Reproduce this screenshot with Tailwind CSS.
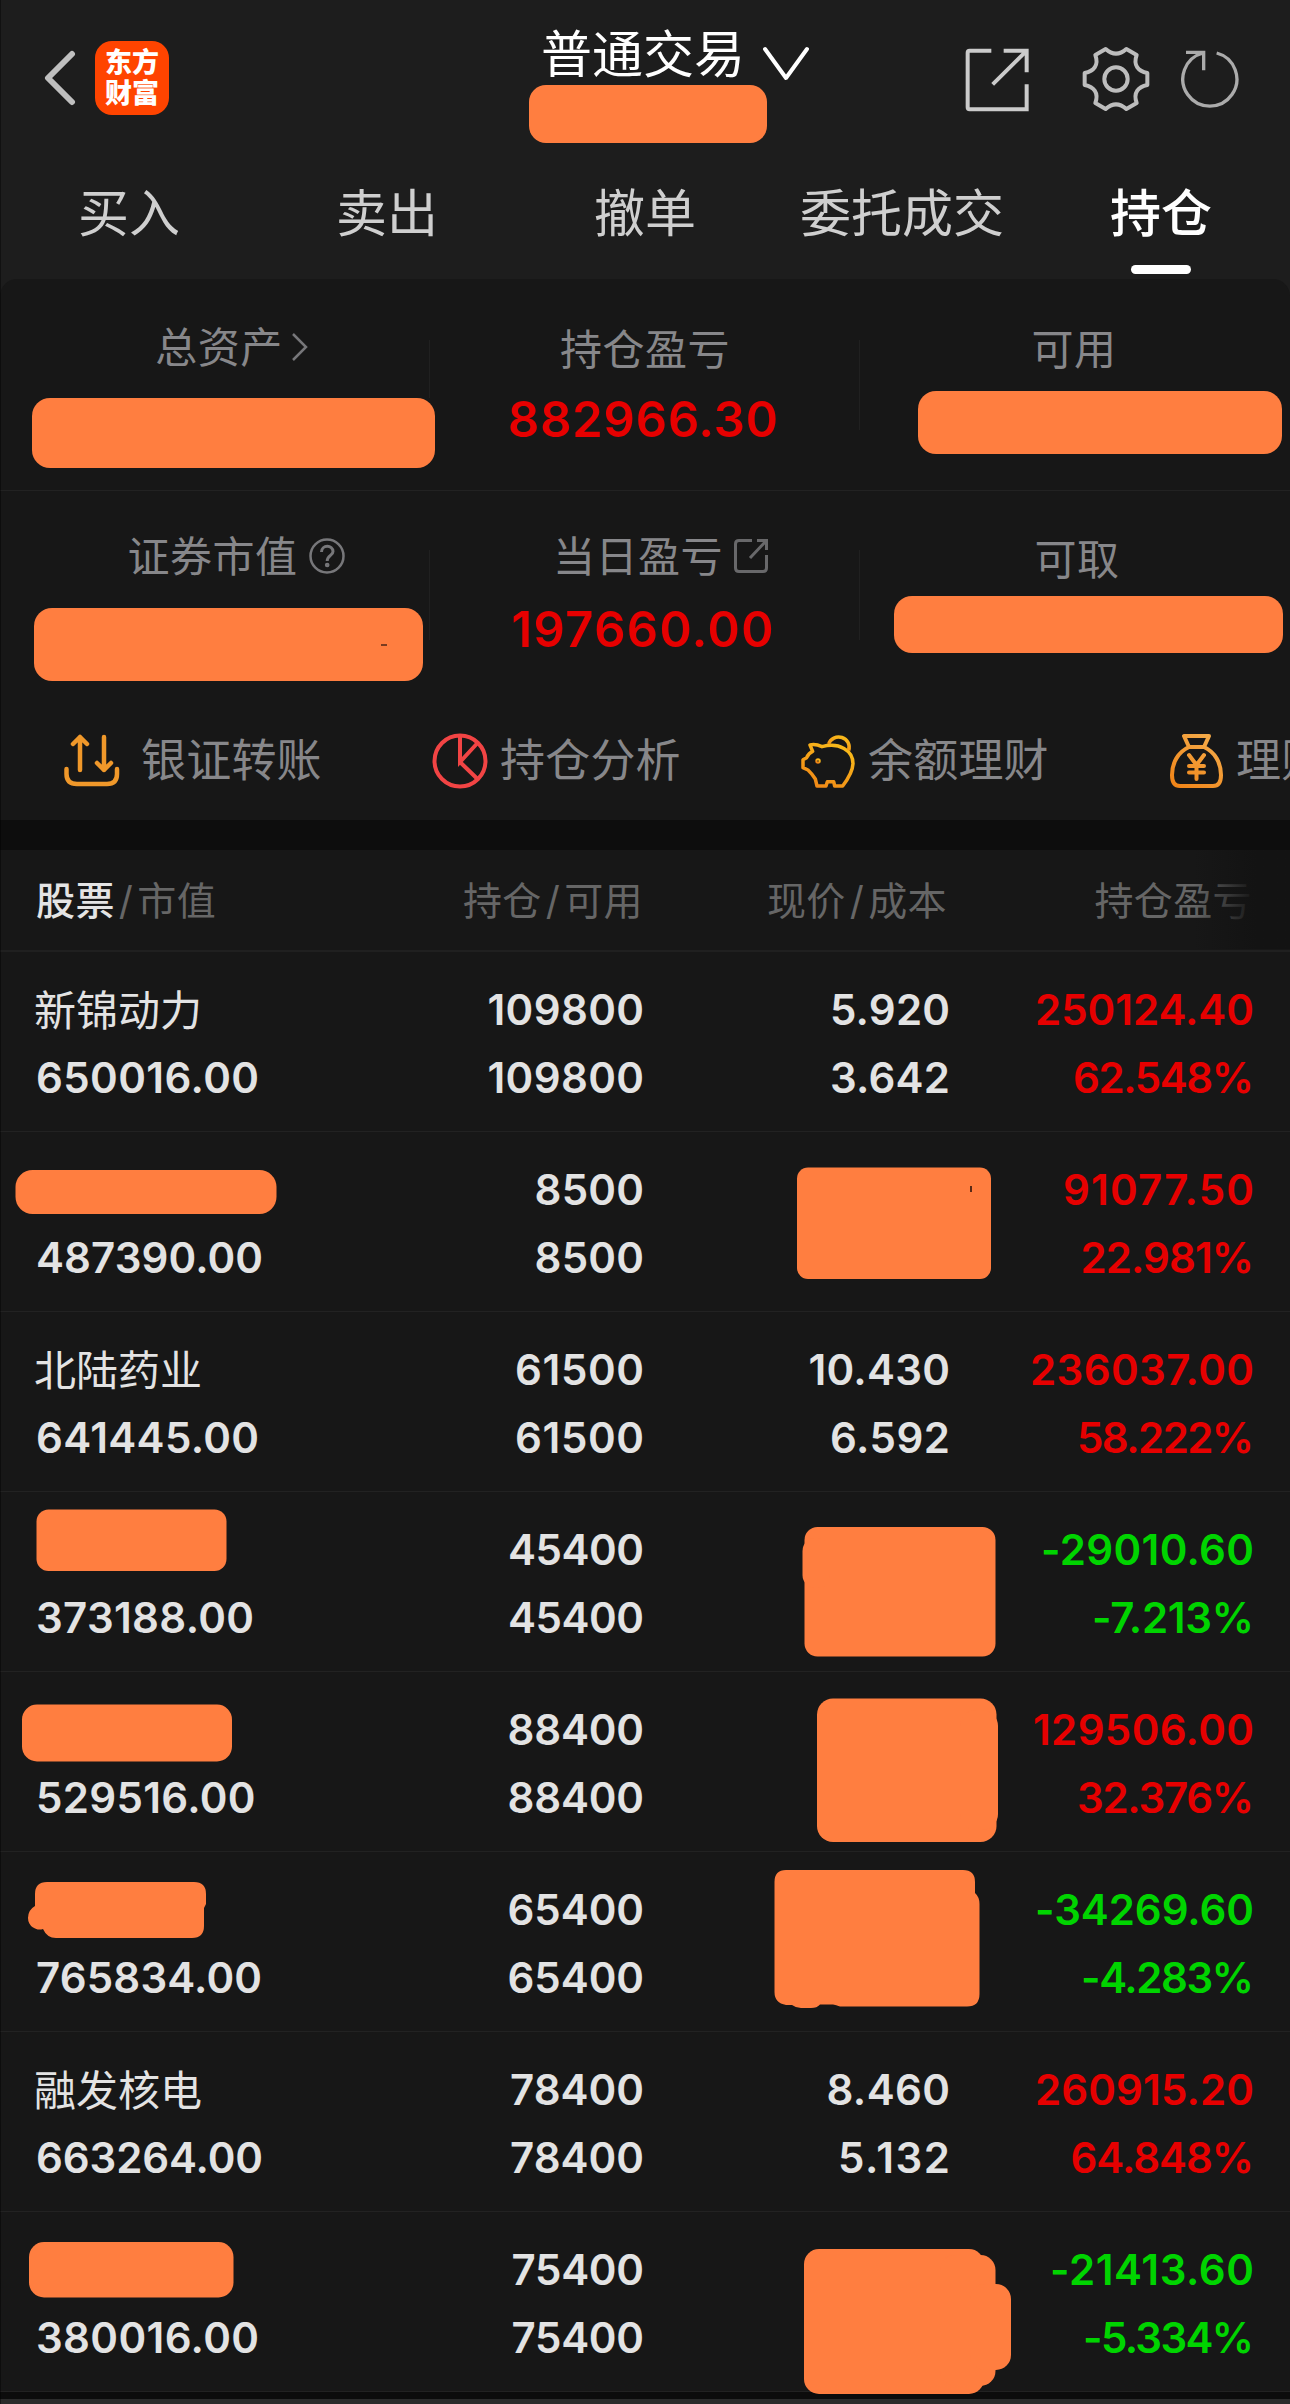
<!DOCTYPE html>
<html lang="zh-CN">
<head>
<meta charset="utf-8">
<title>持仓</title>
<script src="https://cdn.jsdelivr.net/npm/@tailwindcss/browser@4"></script>
</head>
<body class="relative w-[1290px] h-[2404px] overflow-hidden bg-[#1d1d1d] font-['Inter','Noto_Sans_CJK_SC',sans-serif]">
<header class="relative h-[168px] flex justify-between pl-[43px] pr-[49px]">
  <div class="flex items-center gap-[19px] h-[156px]">
    <svg class="w-[33px] h-[56px]" viewBox="0 0 33 56" fill="none" stroke="#bfbfbf" stroke-width="6" stroke-linecap="round" stroke-linejoin="round"><path d="M29 4L5 28L29 52"/></svg>
    <div class="w-[74px] h-[74px] rounded-[17px] bg-[#ff4400] text-white font-black text-[27px] leading-[31px] text-center pt-[6px]">东方<br>财富</div>
  </div>
  <div class="absolute left-[528px] top-[22px] flex items-center">
    <span class="ml-[13px] text-[51px] leading-[66px] text-white whitespace-nowrap">普通交易</span>
    <svg class="mt-[17px] ml-[17px] w-[47px] h-[38px]" viewBox="0 0 47 38" fill="none" stroke="#fff" stroke-width="4" stroke-linecap="round" stroke-linejoin="round"><path d="M3 4L24 33L45 4"/></svg>
  </div>
  <div class="absolute left-[529px] top-[85px] w-[238px] h-[58px] rounded-[17px] bg-[#ff7e40]"></div>
  <div class="flex items-center h-[157px] fill-none">
    <svg class="mt-[3px] w-[64px] h-[64px]" viewBox="18 85 192 192" fill="none" stroke="#cbcbcb" stroke-width="12"><path d="M97 93H32Q26 93 26 99V263Q26 269 32 269H203V194M134 93H203V158M203 93L101 194"/></svg>
    <svg class="ml-[53px] w-[68px] h-[66px]" viewBox="372 77 204 198" fill="none" stroke="#bdbdbd" stroke-width="12" stroke-linejoin="round"><path d="M443 86Q474 114 505 86L536 104C525 135 540 152 568 158V194C540 200 525 217 536 248L505 266Q474 238 443 266L412 248C423 217 408 200 380 194V158C408 152 423 135 412 104Z"/><circle cx="474" cy="176" r="35"/></svg>
    <svg class="ml-[31px] w-[60px] h-[60px]" viewBox="668 86 180 180" fill="none" stroke="#ababab" stroke-width="10"><path d="M775 98A81 81 0 1 1 734 98M683 96H736V150"/></svg>
  </div>
</header>
<nav class="h-[111px] grid grid-cols-5 text-[51px] leading-[92px] text-center text-[#cfcfcf]">
  <span>买入</span><span>卖出</span><span>撤单</span><span class="-ml-[2px]">委托成交</span>
  <span class="text-white font-medium flex flex-col items-center">持仓<i class="w-[60px] h-[9px] rounded-full bg-white mt-[5px]"></i></span>
</nav>

<main>
<section class="h-[541px] rounded-t-[17px] bg-[#171717] text-[42px] text-[#87878a] tracking-[0.5px]">
  <div class="relative h-[212px] grid grid-cols-3 border-b border-[#222]">
    <div class="relative flex justify-center pt-[38px]">
      <div class="flex h-[60px] items-center ml-[34px]">总资产<svg class="ml-[8px] w-[18px] h-[32px]" viewBox="0 0 18 32" fill="none" stroke="#77777a" stroke-width="2.5"><path d="M2 3L15 16L2 29"/></svg></div>
      <div class="absolute left-[32px] top-[119px] w-[403px] h-[70px] rounded-[18px] bg-[#ff7e40]"></div>
      <i class="absolute right-0 top-[61px] w-px h-[58px] bg-[#202020]"></i>
    </div>
    <div class="relative text-center pt-[41px]">
      <div class="h-[60px] leading-[60px]">持仓盈亏</div>
      <div class="-ml-[4px] leading-[80px] text-[49px] font-semibold text-[#e60000]"><span class="inline-block" data-size="49" data-fit="270">882966.30</span></div>
      <i class="absolute right-0 top-[61px] w-px h-[90px] bg-[#202020]"></i>
    </div>
    <div class="relative text-center pt-[41px]">
      <div class="h-[60px] leading-[60px] -ml-[2px]">可用</div>
      <div class="absolute left-[58px] top-[112px] w-[364px] h-[63px] rounded-[18px] bg-[#ff7e40]"></div>
    </div>
  </div>
  <div class="relative h-[210px] grid grid-cols-3">
    <div class="relative flex justify-center pt-[35px]">
      <div class="flex h-[60px] items-center ml-[43px]">证券市值<svg class="ml-[10px] w-[38px] h-[38px]" viewBox="0 0 38 38" fill="none" stroke="#77777a" stroke-width="2.5"><circle cx="19" cy="19" r="16.5"/><path d="M13.5 15C13.5 7.500 25 7.500 25 14.500C25 18.500 19.200 18.500 19.200 24" stroke-width="3"/><circle cx="19.200" cy="28" r="1.100"/></svg></div>
      <div class="absolute left-[34px] top-[117px] w-[389px] h-[73px] rounded-[18px] bg-[#ff7e40]"></div>
      <i class="absolute left-[381px] top-[153px] w-[6px] h-[2px] bg-[#7a3c20]"></i>
      <i class="absolute right-0 top-[59px] w-px h-[90px] bg-[#202020]"></i>
    </div>
    <div class="relative text-center pt-[35px]">
      <div class="h-[60px] flex items-center justify-center ml-[32px]">当日盈亏<svg class="ml-[10px] w-[36px] h-[36px]" viewBox="0 0 36 36" fill="none" stroke="#68686a" stroke-width="3"><path d="M19 2.500H6Q2.500 2.500 2.500 6V30Q2.500 33.500 6 33.500H30Q33.500 33.500 33.500 30V17M24 2.500H33.500V12M33.500 2.500L17 20"/></svg></div>
      <div class="-ml-[5px] mt-[4px] leading-[80px] text-[49px] font-semibold text-[#e60000]"><span class="inline-block" data-size="49" data-fit="262">197660.00</span></div>
      <i class="absolute right-0 top-[59px] w-px h-[90px] bg-[#202020]"></i>
    </div>
    <div class="relative text-center pt-[39px]">
      <div class="h-[60px] leading-[60px] ml-[4px]">可取</div>
      <div class="absolute left-[34px] top-[105px] w-[389px] h-[57px] rounded-[18px] bg-[#ff7e40]"></div>
    </div>
  </div>
  <div class="flex h-[119px] pt-[29px] pl-[63px] text-[45px] tracking-[0.2px] leading-[60px] whitespace-nowrap overflow-hidden">
    <div class="w-[369px] h-[61px] shrink-0 flex items-center">
      <svg class="w-[57px] h-[56px]" viewBox="0 0 57 56" fill="none" stroke="#f0982a" stroke-width="4.500" stroke-linecap="round" stroke-linejoin="round"><path d="M17 37V4M10 11L17 4L24 11M41 4V37M34 30L41 37L48 30M3.500 36V41Q3.500 51 14 51H44Q54 51 54 41V36"/></svg><span class="ml-[21px]">银证转账</span></div>
    <div class="w-[369px] h-[61px] shrink-0 flex items-center">
      <svg class="w-[57px] h-[56px]" viewBox="0 0 57 56" fill="none" stroke="#f24444" stroke-width="4"><circle cx="28" cy="28" r="25.500"/><path d="M28 3V29L45.500 10M28 29L45.500 46"/></svg><span class="ml-[11px]">持仓分析</span></div>
    <div class="w-[367px] h-[61px] shrink-0 flex items-center">
      <svg class="w-[57px] h-[56px]" viewBox="35 38 171 168" fill="none" stroke="url(#gp)" stroke-width="10.500" stroke-linejoin="round"><defs><linearGradient id="gp" x1="0" y1="1" x2="0.600" y2="0"><stop offset="0" stop-color="#f08316"/><stop offset="1" stop-color="#f8b81a"/></linearGradient><linearGradient id="gm" x1="0" y1="1" x2="0.700" y2="0"><stop offset="0" stop-color="#f08316"/><stop offset="1" stop-color="#f4a947"/></linearGradient></defs><path d="M62 74Q78 70 98 79C150 65 191 90 191 130C190 155 176 176 160 197H136L133 184H114L110 197H83L78 176Q66 158 56 149L41 142V118L52 112Q58 98 70 93Z"/><path d="M118 71A31 30 0 1 1 178 90"/><circle cx="86" cy="122" r="3"/></svg><span class="ml-[10px]">余额理财</span></div>
    <div class="h-[61px] shrink-0 flex items-center">
      <svg class="w-[57px] h-[56px]" viewBox="0 0 57 56" fill="none" stroke="url(#gm)" stroke-width="4" stroke-linejoin="round" stroke-linecap="round"><path d="M16 3H41L36 14H21ZM21 14C10 19 4 30 4 42Q4 53 12 53H45Q53 53 53 42C53 30 47 19 36 14M21 22L28.500 32L36 22M28.500 32V46M21 33H36M21 39.500H36"/></svg><span class="ml-[11px]">理财</span></div>
  </div>
</section>
<div class="h-[30px] bg-[#0d0d0d]"></div>
<section class="bg-[#171717]">
  <div class="relative h-[102px] border-b-2 border-[#202020] pl-[36px] pr-[38px] grid grid-cols-[307px_300px_304px_1fr] text-right text-[39px] leading-[102px] tracking-[0.4px] text-[#666] font-normal">
    <span class="text-left"><b class="text-[#e4e4e4] font-medium">股票</b><i class="not-italic mx-[4px]">/</i>市值</span>
    <span>持仓<i class="not-italic mx-[4px]">/</i>可用</span>
    <span>现价<i class="not-italic mx-[4px]">/</i>成本</span>
    <span>持仓盈亏</span>
    <div class="absolute right-0 top-0 w-[96px] h-[99px] bg-linear-to-r from-[#171717]/0 to-[#131313] to-65%"></div>
  </div>
  <div id="rows" class="text-[42px] leading-[68px] font-semibold text-[#e3e3e3]"></div>
</section>
<div class="h-[7px] bg-[#0c0c0c]"></div>
<div class="h-[5px] bg-[#2b2b2b]"></div>
</main>
<div class="absolute left-0 top-0 w-px h-full bg-black/40"></div>

<script>
const box = (x, y, r, b, q) => `<rect x="${x}" y="${y}" width="${r - x}" height="${b - y}" rx="${q}"/>`;
// name, value, shares, price, cost, profit, percent, cover shapes, column widths
const data = [
  ['新锦动力', '650016.00', '109800', '5.920', '3.642', '250124.40', '62.548%', '', [218, 151.5, 115, 115, 214, 176]],
  ['', '487390.00', '8500', '', '', '91077.50', '22.981%', box(15.500, 1170, 276.500, 1214, 17) + box(797, 1167.500, 991, 1279, 11) + '<rect x="970" y="1186" width="2" height="6" fill="#5a2a16"/>', [222, 104.5, 0, 0, 186, 168.5]],
  ['北陆药业', '641445.00', '61500', '10.430', '6.592', '236037.00', '58.222%', '', [218, 124, 136.5, 115, 219, 172]],
  ['', '373188.00', '45400', '', '', '-29010.60', '-7.213%', box(36.500, 1509.500, 226.500, 1571, 12) + box(804.500, 1527, 995.500, 1656.500, 13) + box(802.500, 1538, 830, 1588, 13), [213, 131, 0, 0, 208, 157]],
  ['', '529516.00', '88400', '', '', '129506.00', '32.376%', box(22, 1704.500, 232, 1761.500, 15) + box(817, 1698.500, 996.500, 1842, 16) + box(960, 1710, 998, 1830, 16), [214.5, 131.5, 0, 0, 216, 172]],
  ['', '765834.00', '65400', '', '', '-34269.60', '-4.283%', '<path d="M47 1882H194Q206 1882 206 1894V1904L204 1908V1926Q204 1938 192 1938H56Q47 1938 43 1929A11.500 11.500 0 0 1 28 1918Q28 1910 35 1906V1894Q35 1882 47 1882Z"/><path d="M786 1870H963Q975 1870 975 1882V1893Q979.500 1897 979.500 1904V1994Q979.500 2006.500 967 2006.500H840Q836 2005 833 2004.500H820Q817 2008 811 2008H801Q796 2008 792 2005H786Q774.500 2003 774.500 1992V1882Q774.500 1870 786 1870Z"/>', [221, 131.5, 0, 0, 214, 168]],
  ['融发核电', '663264.00', '78400', '8.460', '5.132', '260915.20', '64.848%', '', [222, 129, 118.5, 107, 214, 178.5]],
  ['', '380016.00', '75400', '', '', '-21413.60', '-5.334%', box(29, 2242, 233.500, 2297.500, 15) + box(804, 2249, 984, 2394, 15) + box(940, 2255, 995.500, 2386, 15) + box(970, 2284, 1011, 2370, 15), [218, 127.5, 0, 0, 199, 166]]
];
const num = (t, w) => `<p class="h-[68px]"><span class="inline-block" data-size="42" data-fit="${w + 5}">${t}</span></p>`;
document.getElementById('rows').innerHTML = data.map((d, i) => {
  const top = 952 + 180 * i;
  const w = d[8];
  const tone = d[5][0] === '-' ? 'text-[#00d400]' : 'text-[#e60000]';
  return `<div class="relative h-[180px] pt-[24px] pl-[36px] pr-[36px] border-b border-[#222] grid grid-cols-[308px_300px_306px_1fr] text-right">
    <div class="text-left"><p class="h-[68px] -ml-[2px] pt-[1px] font-normal">${d[0]}</p>${num(d[1], w[0])}</div>
    <div>${num(d[2], w[1])}${num(d[2], w[1])}</div>
    <div>${num(d[3], w[2])}${num(d[4], w[3])}</div>
    <div class="${tone}">${num(d[5], w[4])}${num(d[6], w[5])}</div>
    <svg class="absolute left-0 top-0 w-[1290px] h-[180px] overflow-visible z-10" viewBox="0 ${top} 1290 180" fill="#ff7e40">${d[7]}</svg>
  </div>`;
}).join('');
// Space the digits so that each figure fills its width
const ctx = document.createElement('canvas').getContext('2d');
document.querySelectorAll('[data-fit]').forEach(e => {
  const n = e.textContent.length;
  if (n < 2) return;
  ctx.font = `600 ${e.dataset.size}px Inter`;
  const s = (e.dataset.fit - ctx.measureText(e.textContent).width) / (n - 1);
  e.style.letterSpacing = s + 'px';
  e.style.marginRight = -s + 'px';
});
</script>
</body>
</html>
